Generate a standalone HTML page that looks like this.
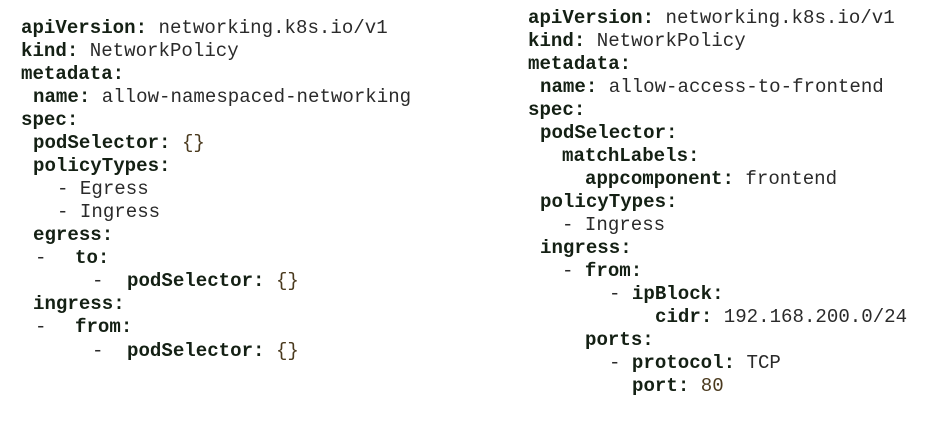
<!DOCTYPE html>
<html><head><style>
body{margin:0;width:938px;height:437px;background:#fff;position:relative;overflow:hidden;font-family:"Liberation Mono","Courier New",monospace;font-size:19.1px;color:#2a2a2a}
.l{position:absolute;white-space:pre;line-height:23px}
b{color:#142014;font-weight:bold}
.n{color:#4a3a1e}
</style></head><body>
<div class="l" style="left:21px;top:17px"><b>apiVersion:</b> networking.k8s.io/v1</div>
<div class="l" style="left:21px;top:40px"><b>kind:</b> NetworkPolicy</div>
<div class="l" style="left:21px;top:63px"><b>metadata:</b></div>
<div class="l" style="left:33px;top:86px"><b>name:</b> allow-namespaced-networking</div>
<div class="l" style="left:21px;top:109px"><b>spec:</b></div>
<div class="l" style="left:33px;top:132px"><b>podSelector:</b> <span class="n">{}</span></div>
<div class="l" style="left:33px;top:155px"><b>policyTypes:</b></div>
<div class="l" style="left:57px;top:178px">- Egress</div>
<div class="l" style="left:57px;top:201px">- Ingress</div>
<div class="l" style="left:33px;top:224px"><b>egress:</b></div>
<div class="l" style="left:35px;top:247px">-</div><div class="l" style="left:75px;top:247px"><b>to:</b></div>
<div class="l" style="left:92px;top:270px">-</div><div class="l" style="left:127px;top:270px"><b>podSelector:</b> <span class="n">{}</span></div>
<div class="l" style="left:33px;top:293px"><b>ingress:</b></div>
<div class="l" style="left:35px;top:316px">-</div><div class="l" style="left:75px;top:316px"><b>from:</b></div>
<div class="l" style="left:92px;top:340px">-</div><div class="l" style="left:127px;top:340px"><b>podSelector:</b> <span class="n">{}</span></div>

<div class="l" style="left:528px;top:7px"><b>apiVersion:</b> networking.k8s.io/v1</div>
<div class="l" style="left:528px;top:30px"><b>kind:</b> NetworkPolicy</div>
<div class="l" style="left:528px;top:53px"><b>metadata:</b></div>
<div class="l" style="left:540px;top:76px"><b>name:</b> allow-access-to-frontend</div>
<div class="l" style="left:528px;top:99px"><b>spec:</b></div>
<div class="l" style="left:540px;top:122px"><b>podSelector:</b></div>
<div class="l" style="left:562px;top:145px"><b>matchLabels:</b></div>
<div class="l" style="left:585px;top:168px"><b>appcomponent:</b> frontend</div>
<div class="l" style="left:540px;top:191px"><b>policyTypes:</b></div>
<div class="l" style="left:562px;top:214px">- Ingress</div>
<div class="l" style="left:540px;top:237px"><b>ingress:</b></div>
<div class="l" style="left:562px;top:260px">- <b>from:</b></div>
<div class="l" style="left:609px;top:283px">- <b>ipBlock:</b></div>
<div class="l" style="left:655px;top:306px"><b>cidr:</b> 192.168.200.0/24</div>
<div class="l" style="left:585px;top:329px"><b>ports:</b></div>
<div class="l" style="left:609px;top:352px">- <b>protocol:</b> TCP</div>
<div class="l" style="left:632px;top:375px"><b>port:</b> <span class="n">80</span></div>
</body></html>
